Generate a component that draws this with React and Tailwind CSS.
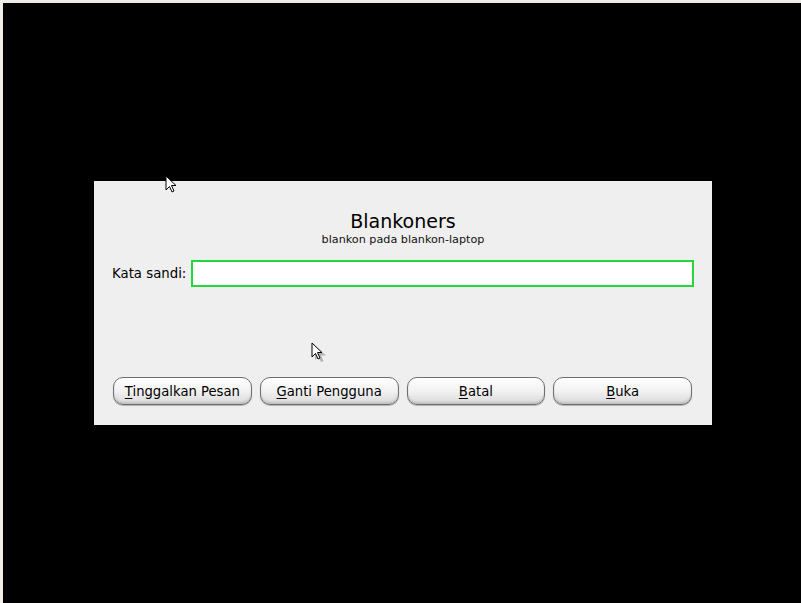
import React from "react";

const buttons = [
  { key: "T", rest: "inggalkan Pesan" },
  { key: "G", rest: "anti Pengguna" },
  { key: "B", rest: "atal" },
  { key: "B", rest: "uka" },
];

function Cursor({ shadow }) {
  return (
    <svg width="16" height="22" viewBox="0 0 16 22">
      {shadow ? (
        <path d="M4 4 L4 18 L7.5 14.5 L10 20 L12.5 19 L10 13.5 L15 13.5 Z" fill="#000" opacity="0.25" />
      ) : null}
      <path
        d="M1 1 L1 15 L4.5 11.5 L7 17 L9 16 L6.5 10.5 L11 10.5 Z"
        fill="#fff"
        stroke="#000"
        strokeWidth="1"
        strokeLinejoin="round"
      />
    </svg>
  );
}

export default function App() {
  return (
    <div
      className="relative h-[603px] w-[801px] overflow-hidden border-l-[3px] border-t-[3px] border-[#f0ece8] bg-black"
      style={{ fontFamily: '"DejaVu Sans", Verdana, sans-serif' }}
    >
      <div className="ml-[91px] mt-[178px] flex h-[244px] w-[618px] flex-col bg-[#efefef] px-[18px] pt-[29px]">
        <h1 className="text-center text-[19px] leading-[23px] text-black">Blankoners</h1>
        <p className="text-center text-[11.2px] leading-[13px] text-[#111]">blankon pada blankon-laptop</p>

        <div className="mt-[14px] flex items-center gap-[5px]">
          <label className="text-[13.3px] leading-[17px] text-black">Kata sandi:</label>
          <input
            className="h-[27px] flex-1 border-2 border-[#22d83a] bg-white outline-none"
            type="password"
          />
        </div>

        <div className="mt-[90px] ml-px mr-[2px] grid grid-cols-4 gap-[8px]">
          {buttons.map((b, i) => (
            <button
              key={i}
              type="button"
              className="h-[28px] rounded-[10px] border border-[#6e6e6e] bg-gradient-to-b from-white via-[#f2f2f2] to-[#d9d9d9] text-[13.2px] leading-[17px] text-black shadow-[inset_0_-2px_2px_rgba(0,0,0,0.12),0_1px_1px_rgba(0,0,0,0.25)]"
            >
              <span className="underline underline-offset-2">{b.key}</span>
              {b.rest}
            </button>
          ))}
        </div>
      </div>

      <div className="absolute left-[162px] top-[172px]">
        <Cursor />
      </div>
      <div className="absolute left-[308px] top-[339px]">
        <Cursor shadow />
      </div>
    </div>
  );
}
